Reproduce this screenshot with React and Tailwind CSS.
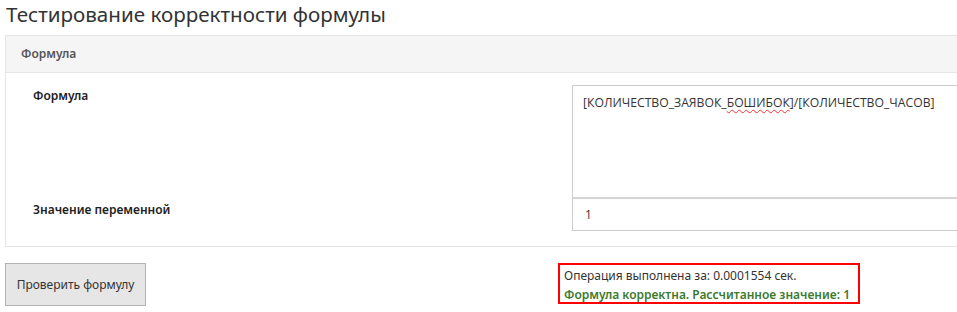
import React from 'react';

const App = () => {
    return (
        <div className="w-[957px] h-[312px] overflow-hidden bg-white font-['Noto_Sans',sans-serif] text-[#333]">
            <div className="w-[1000px] pl-[5px]">
                {/* Page title */}
                <h1 className="h-[35px] pl-[1px] text-[20.6px] leading-[28px] font-normal text-[#333]">
                    Тестирование корректности формулы
                </h1>

                {/* Panel */}
                <div className="border border-[#e5e5e5] w-[995px]">
                    <div className="h-[37px] bg-[#f5f5f5] border-b border-[#e5e5e5] flex items-center pl-[15px]">
                        <span className="text-[12px] font-semibold text-[#555]">Формула</span>
                    </div>

                    <div className="pt-[12px] pb-[15px]">
                        <div className="grid grid-cols-[566px_1fr]">
                            <div className="pl-[27px] pt-[2px] text-[12px] font-semibold text-[#222]">Формула</div>
                            <div className="h-[114px] border border-[#ccc] border-b-2 border-b-[#d4d4d4] pl-[10px] pt-[8px] font-['Open_Sans',sans-serif] text-[12.2px] text-[#333]">
                                [КОЛИЧЕСТВО_ЗАЯВОК_<span className="underline decoration-wavy decoration-[#e33] decoration-1 underline-offset-2">БОШИБОК</span>]/[КОЛИЧЕСТВО_ЧАСОВ]
                            </div>
                        </div>
                        <div className="grid grid-cols-[566px_1fr]">
                            <div className="pl-[27px] pt-[2px] text-[12px] font-semibold text-[#222]">Значение переменной</div>
                            <div className="h-[32px] border border-t-0 border-[#ccc] pl-[12px] flex items-center font-['Open_Sans',sans-serif] text-[12px] text-[#333]">
                                1
                            </div>
                        </div>
                    </div>
                </div>

                {/* Actions & result */}
                <div className="flex items-start mt-[16px]">
                    <button className="w-[141px] h-[43px] bg-[#e6e6e6] border border-[#b3b3b3] text-[12px] text-[#333]">
                        Проверить формулу
                    </button>
                    <div className="ml-[412px] border-2 border-[#ff0000] w-[302px] h-[41px] pl-[4px] pt-[1px] text-[12px] leading-[19px]">
                        <div className="text-[#333]">Операция выполнена за: 0.0001554 сек.</div>
                        <div className="font-semibold text-[#3c7a2e]">Формула корректна. Рассчитанное значение: 1</div>
                    </div>
                </div>
            </div>
        </div>
    );
};

export default App;
